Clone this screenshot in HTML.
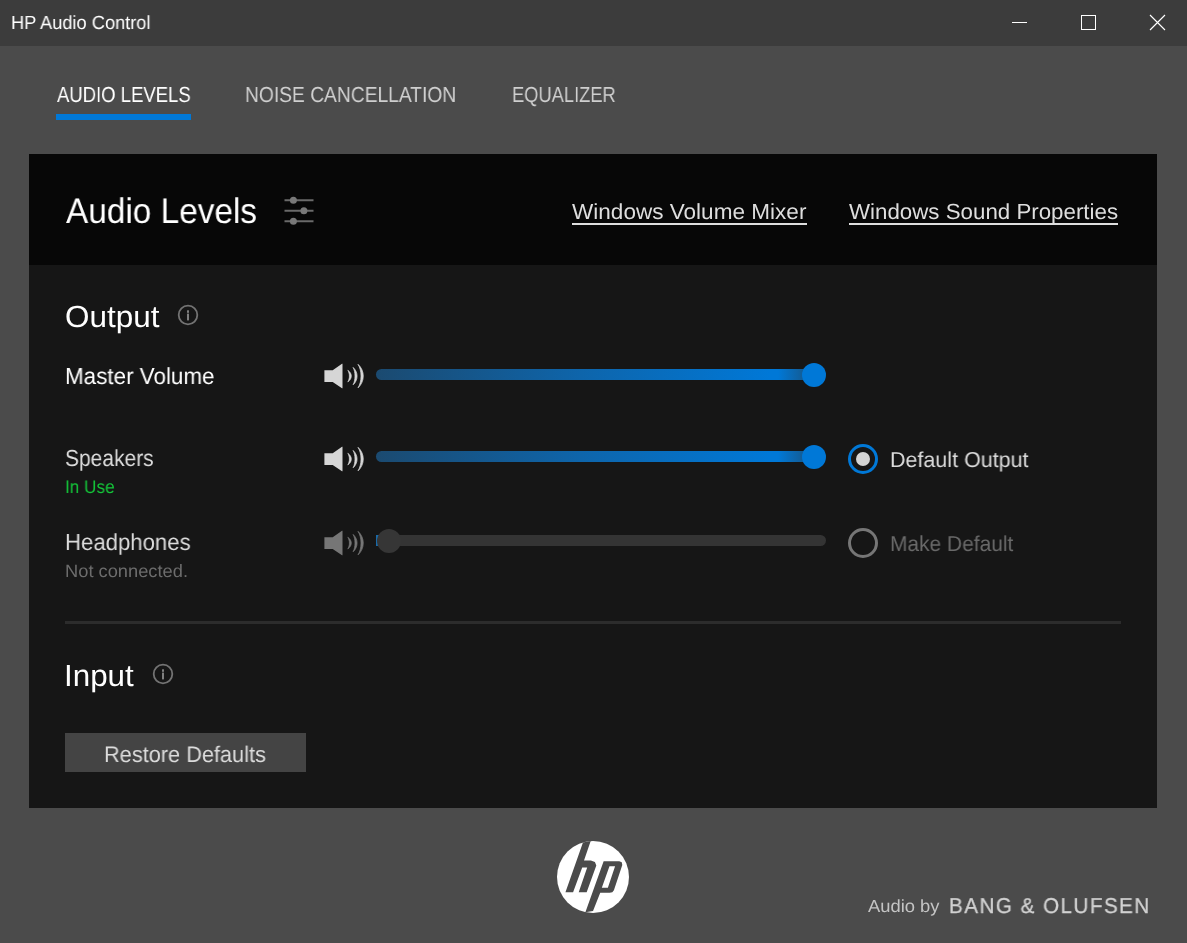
<!DOCTYPE html>
<html><head><meta charset="utf-8"><title>HP Audio Control</title>
<style>
html,body{margin:0;padding:0;}
body{width:1187px;height:943px;overflow:hidden;background:#4b4b4b;position:relative;font-family:"Liberation Sans",sans-serif;}
.a{position:absolute;}
.t{position:absolute;white-space:nowrap;transform-origin:0 50%;display:block;will-change:transform;text-rendering:geometricPrecision;}
#titlebar{left:0;top:0;width:1187px;height:46px;background:#3c3c3c;}
#tabline{left:56px;top:114px;width:135px;height:6px;background:#0078d7;}
#phead{left:29px;top:154px;width:1128px;height:111px;background:#070707;}
#pbody{left:29px;top:265px;width:1128px;height:543px;background:#161616;}
.ul{height:2px;background:#dedede;top:222.6px;}
#divider{left:65px;top:621px;width:1056px;height:3px;background:#2c2c2c;}
#btn{left:65px;top:733px;width:241px;height:39px;background:#444444;}
.track{height:11px;border-radius:5.5px;}
.trb{border-radius:5.5px 0 0 5.5px;}
.thumb{width:24px;height:24px;border-radius:50%;}
.radio{width:24px;height:24px;border-radius:50%;border:3px solid #0078d7;}
</style></head>
<body>
<div id="titlebar" class="a"></div>
<svg class="a" style="left:0;top:0" width="1187" height="46" viewBox="0 0 1187 46"><g stroke="#ffffff" stroke-width="1" fill="none"><path d="M1012 22.5H1027"/><rect x="1081.5" y="15.5" width="14" height="14"/><path stroke-width="1.15" d="M1150 15L1165 30M1165 15L1150 30"/></g></svg>
<div id="tabline" class="a"></div>
<div id="phead" class="a"></div><div id="pbody" class="a"></div>
<svg class="a" style="left:0;top:0" width="1187" height="943" viewBox="0 0 1187 943"><g stroke="#6a6a6a" stroke-width="2"><path d="M284.5 200.2H313.5M284.5 210.7H313.5M284.5 221.2H313.5"/></g><g fill="#787878"><circle cx="293.4" cy="200.2" r="3.5"/><circle cx="303.9" cy="210.7" r="3.5"/><circle cx="293.4" cy="221.2" r="3.5"/></g><g fill="none" stroke="#737373" stroke-width="1.8"><circle cx="188" cy="315" r="9.3"/><circle cx="163" cy="674" r="9.3"/></g><g fill="#808080"><rect x="187" y="313.6" width="2" height="6.8"/><rect x="187" y="310.3" width="2" height="2.5"/><rect x="162" y="672.6" width="2" height="6.8"/><rect x="162" y="669.3" width="2" height="2.5"/></g><g transform="translate(0,0)" fill="#d6d6d6" stroke="#d6d6d6"><path stroke="none" d="M324.4 370.3H332.7L342 363.7H342.5V388.2H342L332.7 381.9H324.4Z"/><path stroke-width="0.7" stroke-linejoin="round" d="M347.80 370.30C352.47 373.43 352.47 378.77 347.80 381.90C349.93 378.77 349.93 373.43 347.80 370.30ZM353.10 367.40C358.43 372.10 358.43 380.10 353.10 384.80C355.63 380.10 355.63 372.10 353.10 367.40ZM358.00 364.30C365.07 370.67 365.07 381.53 358.00 387.90C362.00 381.53 362.00 370.67 358.00 364.30Z"/></g><g transform="translate(0,83)" fill="#d6d6d6" stroke="#d6d6d6"><path stroke="none" d="M324.4 370.3H332.7L342 363.7H342.5V388.2H342L332.7 381.9H324.4Z"/><path stroke-width="0.7" stroke-linejoin="round" d="M347.80 370.30C352.47 373.43 352.47 378.77 347.80 381.90C349.93 378.77 349.93 373.43 347.80 370.30ZM353.10 367.40C358.43 372.10 358.43 380.10 353.10 384.80C355.63 380.10 355.63 372.10 353.10 367.40ZM358.00 364.30C365.07 370.67 365.07 381.53 358.00 387.90C362.00 381.53 362.00 370.67 358.00 364.30Z"/></g><g transform="translate(0,167)" fill="#767676" stroke="#767676"><path stroke="none" d="M324.4 370.3H332.7L342 363.7H342.5V388.2H342L332.7 381.9H324.4Z"/><path stroke-width="0.7" stroke-linejoin="round" d="M347.80 370.30C352.47 373.43 352.47 378.77 347.80 381.90C349.93 378.77 349.93 373.43 347.80 370.30ZM353.10 367.40C358.43 372.10 358.43 380.10 353.10 384.80C355.63 380.10 355.63 372.10 353.10 367.40ZM358.00 364.30C365.07 370.67 365.07 381.53 358.00 387.90C362.00 381.53 362.00 370.67 358.00 364.30Z"/></g><circle cx="593" cy="877" r="36" fill="#ffffff"/><path fill="#4b4b4b" d="M582.95 842.50L590.69 840.91L584.01 860.52L590.90 860.52L594.93 861.90L596.31 865.51L586.66 892.34L578.71 892.34L587.19 867.42L582.21 867.42L573.09 892.34L565.45 892.34Z"/><path fill="#4b4b4b" fill-rule="evenodd" d="M603.63 861.27L619.32 861.27L621.76 862.33L622.29 865.08L613.91 890.22L612.32 892.23L609.67 892.87L600.23 892.87L593.02 911.11L585.39 912.17ZM609.46 866.36L615.08 866.36L607.87 887.78L601.82 887.78Z"/></svg>
<div class="a ul" style="left:572px;width:235px;"></div><div class="a ul" style="left:849px;width:269px;"></div>
<div class="a track trb" style="left:376px;top:369px;width:428px;background:linear-gradient(to right,#1b4a70 0%,#0e65ab 48%,#0078d7 92%,#0078d7 94%,#135c95 100%)"></div>
<div class="a thumb" style="left:802px;top:363px;background:#0078d7"></div>
<div class="a track trb" style="left:376px;top:451px;width:428px;background:linear-gradient(to right,#1b4a70 0%,#0e65ab 48%,#0078d7 92%,#0078d7 94%,#135c95 100%)"></div>
<div class="a thumb" style="left:802px;top:445px;background:#0078d7"></div>
<div class="a track" style="left:376px;top:535px;width:450px;background:#343434"></div>
<div class="a" style="left:376px;top:535px;width:3px;height:11px;background:#1a6aa8"></div>
<div class="a thumb" style="left:377px;top:529px;background:#363636"></div>
<div class="a radio" style="left:848px;top:444px;"></div>
<div class="a" style="left:856px;top:452px;width:14px;height:14px;border-radius:50%;background:#d4d4d4"></div>
<div class="a radio" style="left:848px;top:528px;border-color:#767676"></div>
<div id="divider" class="a"></div>
<div id="btn" class="a"></div>
<span id="title" class="t" style="left:11.00px;top:14.00px;font-size:19.00px;line-height:19.00px;color:#ffffff;transform-origin:0 16.00px;transform:scale(0.9593,1.0000);">HP Audio Control</span>
<span id="tab1" class="t" style="left:57.00px;top:84.00px;font-size:21.80px;line-height:21.80px;color:#ffffff;transform-origin:0 18.00px;transform:scale(0.8489,1.0000);">AUDIO LEVELS</span>
<span id="tab2" class="t" style="left:245.00px;top:84.00px;font-size:21.80px;line-height:21.80px;color:#cfcfcf;transform-origin:0 18.00px;transform:scale(0.8819,1.0000);">NOISE CANCELLATION</span>
<span id="tab3" class="t" style="left:512.00px;top:84.00px;font-size:21.80px;line-height:21.80px;color:#cfcfcf;transform-origin:0 18.00px;transform:scale(0.8394,1.0000);">EQUALIZER</span>
<span id="h1" class="t" style="left:66.00px;top:194.00px;font-size:35.50px;line-height:35.50px;color:#ffffff;transform-origin:0 29.00px;transform:scale(0.9394,1.0000);">Audio Levels</span>
<span id="link1" class="t" style="left:572.00px;top:201.00px;font-size:21.90px;line-height:21.90px;color:#dedede;transform-origin:0 18.00px;transform:scale(1.0304,1.0000);">Windows Volume Mixer</span>
<span id="link2" class="t" style="left:849.00px;top:201.00px;font-size:21.90px;line-height:21.90px;color:#dedede;transform-origin:0 18.00px;transform:scale(1.0190,1.0000);">Windows Sound Properties</span>
<span id="output" class="t" style="left:65.00px;top:302.00px;font-size:30.50px;line-height:30.50px;color:#ffffff;transform-origin:0 26.00px;transform:scale(1.0311,1.0000);">Output</span>
<span id="master" class="t" style="left:65.00px;top:365.00px;font-size:23.20px;line-height:23.20px;color:#ffffff;transform-origin:0 19.00px;transform:scale(0.9667,1.0000);">Master Volume</span>
<span id="speakers" class="t" style="left:65.00px;top:447.00px;font-size:23.20px;line-height:23.20px;color:#dcdcdc;transform-origin:0 19.00px;transform:scale(0.9051,1.0000);">Speakers</span>
<span id="inuse" class="t" style="left:65.00px;top:478.00px;font-size:18.30px;line-height:18.30px;color:#14c83a;transform-origin:0 15.00px;transform:scale(0.9388,1.0000);">In Use</span>
<span id="headph" class="t" style="left:65.00px;top:531.00px;font-size:23.20px;line-height:23.20px;color:#dcdcdc;transform-origin:0 19.00px;transform:scale(0.9555,1.0000);">Headphones</span>
<span id="notconn" class="t" style="left:65.00px;top:563.00px;font-size:17.80px;line-height:17.80px;color:#6c6c6c;transform-origin:0 14.00px;transform:scale(1.0284,1.0000);">Not connected.</span>
<span id="defout" class="t" style="left:890.00px;top:449.00px;font-size:21.60px;line-height:21.60px;color:#dcdcdc;transform-origin:0 18.00px;transform:scale(0.9944,1.0000);">Default Output</span>
<span id="makedef" class="t" style="left:890.00px;top:533.00px;font-size:21.60px;line-height:21.60px;color:#6a6a6a;transform-origin:0 18.00px;transform:scale(0.9688,1.0000);">Make Default</span>
<span id="input" class="t" style="left:64.00px;top:661.00px;font-size:30.50px;line-height:30.50px;color:#ffffff;transform-origin:0 26.00px;transform:scale(1.0279,1.0000);">Input</span>
<span id="restore" class="t" style="left:104.00px;top:744.00px;font-size:22.60px;line-height:22.60px;color:#dcdcdc;transform-origin:0 18.00px;transform:scale(0.9622,1.0000);">Restore Defaults</span>
<span id="audioby" class="t" style="left:868.00px;top:898.00px;font-size:17.50px;line-height:17.50px;color:#c4c4c4;transform-origin:0 14.00px;transform:scale(1.0503,1.0000);">Audio by</span>
<span id="bo" class="t" style="left:949.00px;top:896.00px;font-size:21.50px;line-height:21.50px;color:#d2d2d2;transform-origin:0 17.00px;transform:scale(0.9555,1.0000);letter-spacing:1.6px;-webkit-text-stroke:0.3px #d2d2d2;">BANG &amp; OLUFSEN</span>
</body></html>
